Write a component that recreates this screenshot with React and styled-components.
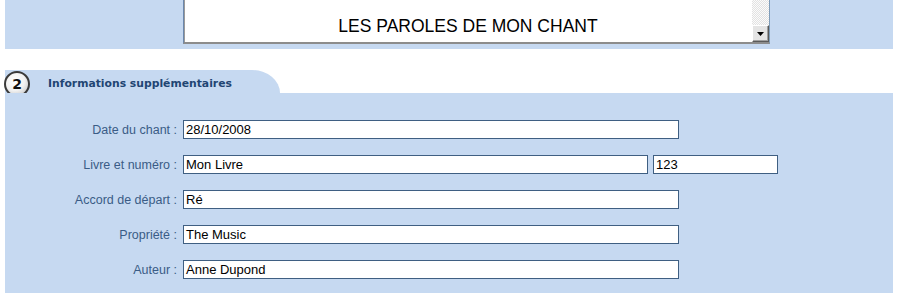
import React from "react";
import styled, {createGlobalStyle} from "styled-components";

const GlobalStyle = createGlobalStyle`
  body {
    margin: 0;
    background: #ffffff;
    font-family: "Liberation Sans", Arial, sans-serif;
  }
`

const Page = styled.div`
  display: flex;
  flex-direction: column;
  padding: 0 7px 0 5px;
  width: 888px;
`

const TopPanel = styled.div`
  height: 49px;
  background: #c6d9f1;
  overflow: hidden;
  display: flex;
  align-items: flex-end;
  padding: 0 0 5px 178px;
  box-sizing: border-box;
`

const Lyrics = styled.div`
  width: 585px;
  height: 120px;
  flex-shrink: 0;
  display: flex;
  background: #ffffff;
  border-left: 1px solid #6b87ad;
  border-top: 1px solid #6b87ad;
  border-right: 1px solid #7f9db9;
  border-bottom: 2px solid #8c8c8c;
  box-shadow: inset 1px 1px 0 #9a9a9a;
`

const LyricsText = styled.div`
  flex: 1;
  display: flex;
  flex-direction: column;
  justify-content: flex-end;
  align-items: center;
  padding-bottom: 6px;
  font-size: 17.5px;
  color: #000000;
  line-height: 20px;
`

const ScrollBar = styled.div`
  width: 17px;
  display: flex;
  flex-direction: column;
  justify-content: flex-end;
  background-color: #f0f0f0;
  background-image: repeating-conic-gradient(#e2e2e2 0 25%, #fbfbfb 0 50%);
  background-size: 2px 2px;
`

const ScrollButton = styled.div`
  height: 17px;
  background: #e4e4e4;
  border-top: 1px solid #ffffff;
  border-left: 1px solid #ffffff;
  border-right: 1px solid #5a5a5a;
  border-bottom: 1px solid #5a5a5a;
  box-shadow: inset -1px -1px 0 #a0a0a0;
  box-sizing: border-box;
  display: flex;
  align-items: center;
  justify-content: center;
`

const Section = styled.div`
  margin-top: 21px;
  display: flex;
  flex-direction: column;
`

const Tab = styled.div`
  width: 275px;
  height: 23px;
  background: #c6d9f1;
  border-top-right-radius: 28px 23px;
  display: flex;
  align-items: center;
  gap: 18px;
`

const Badge = styled.div`
  width: 22px;
  height: 22px;
  margin-left: -1px;
  margin-top: 5px;
  border-radius: 50%;
  border: 2px solid #3a3a3a;
  background: radial-gradient(circle at 40% 35%, #ffffff 0%, #f2f2f2 50%, #b8b8b8 100%);
  display: flex;
  align-items: center;
  justify-content: center;
  font-family: "DejaVu Sans", Verdana, sans-serif;
  font-weight: bold;
  font-size: 14px;
  color: #111111;
`

const TabTitle = styled.span`
  margin-top: 4px;
  font-family: "DejaVu Sans", Verdana, sans-serif;
  font-weight: bold;
  font-size: 10.8px;
  color: #1f4573;
`

const FormPanel = styled.div`
  background: #c6d9f1;
  padding: 27px 0 14px;
  display: grid;
  grid-template-columns: 172px auto;
  column-gap: 6px;
  row-gap: 16px;
  align-items: center;
`

const Label = styled.label`
  text-align: right;
  font-size: 12.5px;
  color: #3a5c86;
`

const Fields = styled.div`
  display: flex;
  gap: 5px;
`

const Field = styled.div`
  width: ${p => p.$w}px;
  height: 19px;
  box-sizing: border-box;
  background: #ffffff;
  border: 1px solid #3f5f82;
  padding: 0 2px;
  font-size: 13px;
  line-height: 18px;
  color: #000000;
`

const rows = [
    {label: "Date du chant :", fields: [{w: 496, v: "28/10/2008"}]},
    {label: "Livre et numéro :", fields: [{w: 465, v: "Mon Livre"}, {w: 125, v: "123"}]},
    {label: "Accord de départ :", fields: [{w: 496, v: "Ré"}]},
    {label: "Propriété :", fields: [{w: 496, v: "The Music"}]},
    {label: "Auteur :", fields: [{w: 496, v: "Anne Dupond"}]},
];

const App = () => {
    return (
        <>
            <GlobalStyle/>
            <Page>
                <TopPanel>
                    <Lyrics>
                        <LyricsText>LES PAROLES DE MON CHANT</LyricsText>
                        <ScrollBar>
                            <ScrollButton>
                                <svg width="7" height="4" viewBox="0 0 7 4">
                                    <path d="M0 0h7L3.5 4z" fill="#000"/>
                                </svg>
                            </ScrollButton>
                        </ScrollBar>
                    </Lyrics>
                </TopPanel>
                <Section>
                    <Tab>
                        <Badge>2</Badge>
                        <TabTitle>Informations supplémentaires</TabTitle>
                    </Tab>
                    <FormPanel>
                        {rows.map(r => (
                            <React.Fragment key={r.label}>
                                <Label>{r.label}</Label>
                                <Fields>
                                    {r.fields.map(f => (
                                        <Field key={f.v} $w={f.w}>{f.v}</Field>
                                    ))}
                                </Fields>
                            </React.Fragment>
                        ))}
                    </FormPanel>
                </Section>
            </Page>
        </>
    );
}

export default App;
